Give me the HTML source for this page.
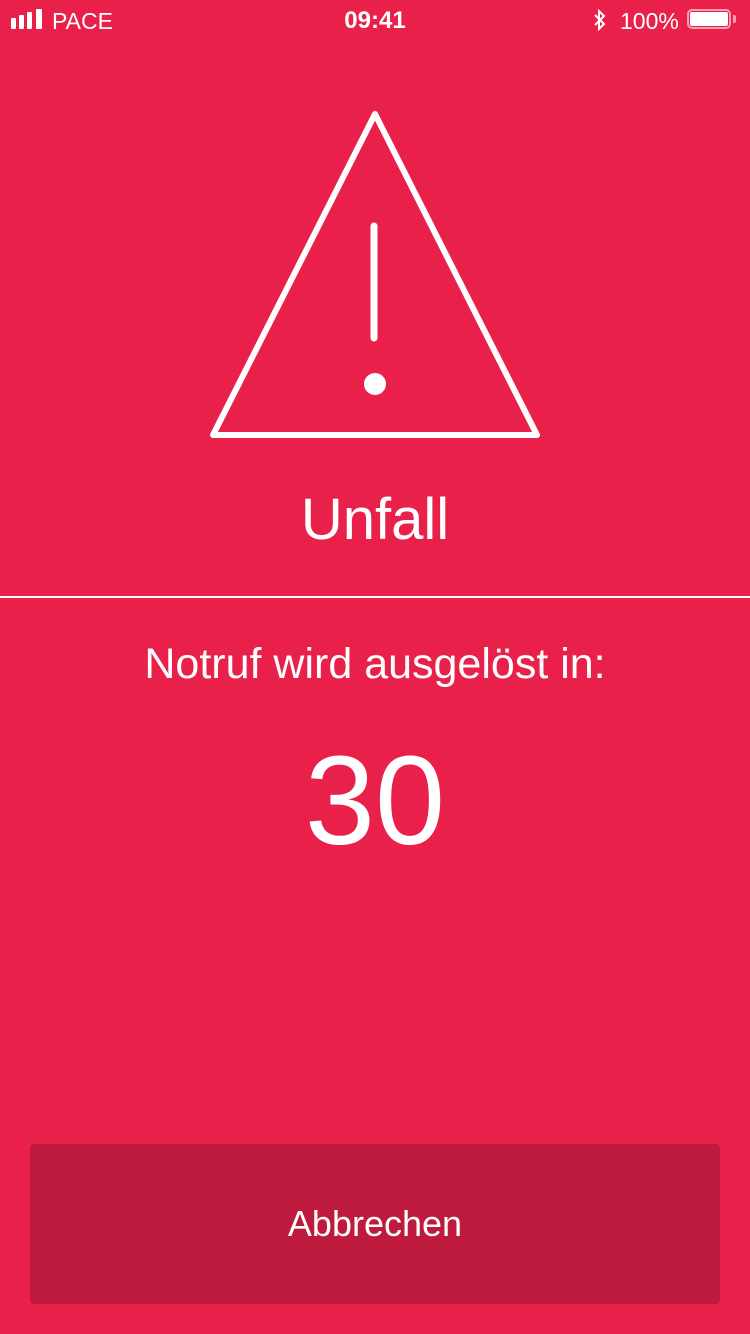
<!DOCTYPE html>
<html><head><meta charset="utf-8"><style>
body{margin:0;width:750px;height:1334px;background:#e8204a;position:relative;overflow:hidden;font-family:"Liberation Sans",sans-serif;color:#fff}
.a{position:absolute}
</style></head><body>
<div class="a" style="left:11px;top:18px;width:5px;height:11px;background:#fff;border-radius:1px"></div>
<div class="a" style="left:19px;top:15px;width:5px;height:14px;background:#fff;border-radius:1px"></div>
<div class="a" style="left:27px;top:12px;width:5px;height:17px;background:#fff;border-radius:1px"></div>
<div class="a" style="left:36px;top:9px;width:6px;height:20px;background:#fff;border-radius:1px"></div>
<div class="a" style="left:52px;top:7px;font-size:23px;line-height:28px">PACE</div>
<div class="a" style="left:0;width:750px;text-align:center;top:7px;font-size:24px;line-height:28px;font-weight:bold">09:41</div>
<svg class="a" style="left:592px;top:9px" width="16" height="22" viewBox="0 0 16 22"><path d="M3 6 L12 15 L7 20 V2 L12 7 L3 16" fill="none" stroke="#fff" stroke-width="2"/></svg>
<div class="a" style="left:620px;top:7px;font-size:23px;line-height:28px">100%</div>
<div class="a" style="left:687px;top:9px;width:44px;height:20px;border:2px solid #f5a0b0;border-radius:5px;box-sizing:border-box"></div>
<div class="a" style="left:690px;top:12px;width:38px;height:14px;background:#fff;border-radius:2px"></div>
<div class="a" style="left:733px;top:15px;width:3px;height:8px;background:#f5a0b0;border-radius:0 2px 2px 0"></div>
<svg class="a" style="left:0;top:0" width="750" height="450"><path d="M375 114 L537 435 L213 435 Z" fill="none" stroke="#fff" stroke-width="6" stroke-linejoin="round"/><line x1="374" y1="226" x2="374" y2="338" stroke="#fff" stroke-width="7" stroke-linecap="round"/><circle cx="375" cy="384" r="11" fill="#fff"/></svg>
<div class="a" style="left:0;width:750px;text-align:center;top:485px;font-size:58px;line-height:70px">Unfall</div>
<div class="a" style="left:0;top:596px;width:750px;height:2px;background:#fff"></div>
<div class="a" style="left:0;width:750px;text-align:center;top:638px;font-size:43px;line-height:52px">Notruf wird ausgelöst in:</div>
<div class="a" style="left:0;width:750px;text-align:center;top:735px;font-size:126px;line-height:132px">30</div>
<div class="a" style="left:30px;top:1144px;width:690px;height:160px;background:#be1a3e;border-radius:4px;text-align:center;line-height:160px;font-size:36px">Abbrechen</div>
</body></html>
